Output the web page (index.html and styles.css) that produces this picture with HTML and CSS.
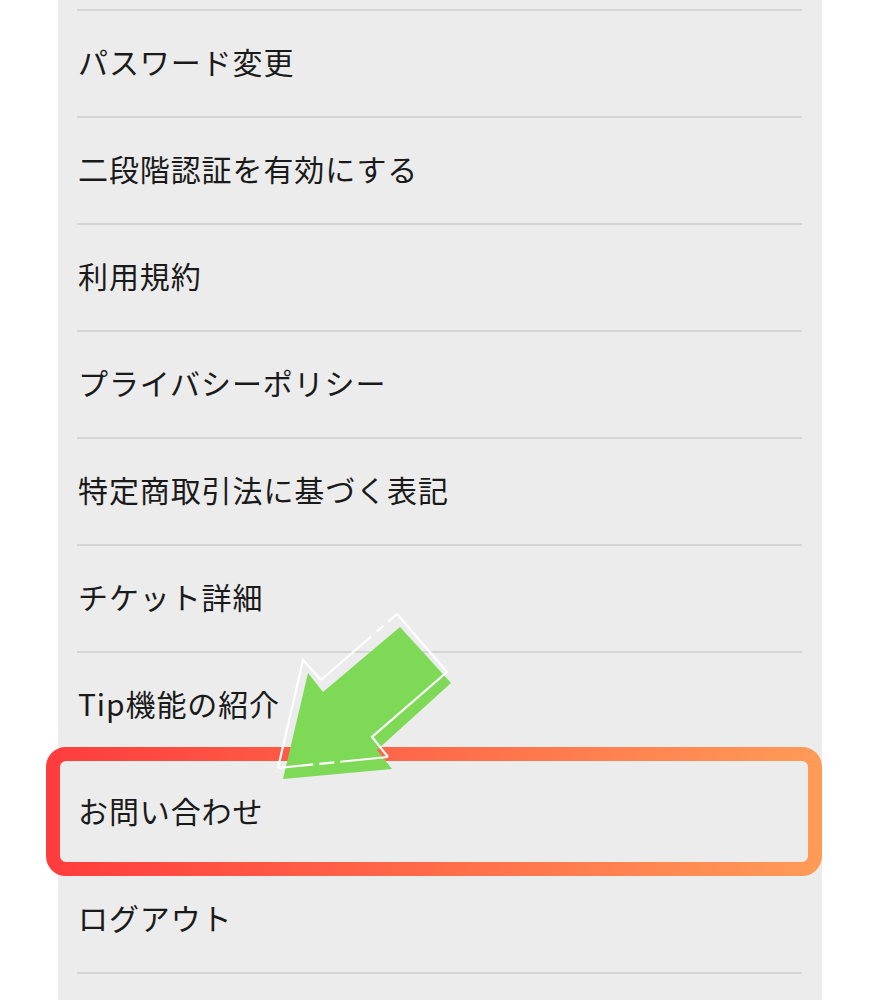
FILE: index.html
```html
<!DOCTYPE html>
<html lang="ja">
<head>
    <meta charset="UTF-8">
    <meta name="viewport" content="width=device-width, initial-scale=1.0">
    <title>設定</title>
    <link rel="stylesheet" href="styles.css">
</head>
<body>
    <div class="panel">
        <ul class="menu">
            <li class="menu-item">パスワード変更</li>
            <li class="menu-item">二段階認証を有効にする</li>
            <li class="menu-item">利用規約</li>
            <li class="menu-item">プライバシーポリシー</li>
            <li class="menu-item">特定商取引法に基づく表記</li>
            <li class="menu-item">チケット詳細</li>
            <li class="menu-item">Tip機能の紹介</li>
            <li class="menu-item">お問い合わせ</li>
            <li class="menu-item">ログアウト</li>
            <li class="menu-item"></li>
        </ul>
    </div>

    <!-- highlight around お問い合わせ -->
    <svg class="highlight" width="776" height="129" viewBox="0 0 776 129">
        <defs>
            <linearGradient id="hl" x1="0" y1="0" x2="1" y2="0">
                <stop offset="0" stop-color="#ff3d3d"/>
                <stop offset="1" stop-color="#ff9a57"/>
            </linearGradient>
        </defs>
        <rect x="7" y="7" width="762" height="115" rx="13" fill="none" stroke="url(#hl)" stroke-width="14"/>
    </svg>

    <svg class="arrow" width="190" height="180" viewBox="0 0 190 180">
        <polygon points="13,174 122,164 107,145 181,78 130,22 53,87 38,68" fill="#7ed957"/>
        <g fill="none" stroke="#fff" stroke-width="2.2" stroke-linejoin="miter">
            <polyline points="51,75 33,55 8,163"/>
            <polyline points="118,152 102,132 177,67 127,9"/>
            <path d="M127 9 L51 75" stroke-dasharray="12 6 9 7 200"/>
            <path d="M118 152 L8 163" stroke-dasharray="48 6 15 6 200"/>
        </g>
    </svg>
</body>
</html>
```

FILE: styles.css
```css
body {
    margin: 0;
    padding: 0;
    background-color: #ffffff;
    font-family: "Noto Sans CJK JP", "Noto Sans", sans-serif;
    color: #1a1a1a;
}

.panel {
    width: 764px;
    height: 1000px;
    overflow: hidden;
    margin-left: 58px;
    background-color: #ececec;
    padding: 9px 20px 0 19px;
    box-sizing: border-box;
}

.menu {
    list-style: none;
    margin: 0;
    padding: 0;
}

.menu-item {
    height: 105px;
    border-top: 2px solid #d5d5d5;
    display: flex;
    align-items: center;
    padding: 0 0 5px 1px;
    box-sizing: content-box;
    height: 100px;
    font-size: 30px;
    letter-spacing: 0.9px;
}

.highlight {
    position: absolute;
    left: 46px;
    top: 747px;
}

.arrow {
    position: absolute;
    left: 270px;
    top: 605px;
}
```
